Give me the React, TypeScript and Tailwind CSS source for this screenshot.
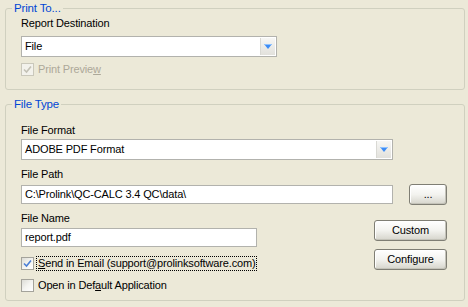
import React, { useState } from 'react';

const font = "font-['Liberation_Sans',Arial,sans-serif] tracking-[-0.15px]";

const DropArrow: React.FC = () => (
  <svg width="8" height="5" viewBox="0 0 8 5">
    <polygon points="0,0 8,0 4,5" fill="#3d8cf5" />
    <rect x="0" y="0" width="8" height="1" fill="#8fc2ff" />
  </svg>
);

interface ComboProps {
  value: string;
  width: string;
}

const Combo: React.FC<ComboProps> = ({ value, width }) => (
  <div className={`flex h-[21px] ${width} border border-[#b2b2ad] bg-white`}>
    <div className="flex flex-1 items-center pl-[3px] text-[11px] text-black">{value}</div>
    <div className="my-[1px] mr-[1px] flex w-[15px] items-center justify-center border-l border-[#d9d9d4] bg-gradient-to-b from-[#f7f7f5] to-[#e2e1dc]">
      <DropArrow />
    </div>
  </div>
);

const CheckMark: React.FC<{ color: string }> = ({ color }) => (
  <svg width="9" height="9" viewBox="0 0 9 9">
    <path d="M1 4.5 L3.5 7 L8 1.5" stroke={color} strokeWidth="1.6" fill="none" />
  </svg>
);

interface CheckProps {
  checked: boolean;
  disabled?: boolean;
  focused?: boolean;
  onToggle?: () => void;
  children: React.ReactNode;
}

const Check: React.FC<CheckProps> = ({ checked, disabled, focused, onToggle, children }) => (
  <div className="flex h-[15px] items-center" onClick={disabled ? undefined : onToggle}>
    <div
      className={`flex h-[13px] w-[13px] items-center justify-center border ${
        disabled ? 'border-[#cac8bb] bg-[#f3f2ec]' : 'border-[#a4a39b] bg-gradient-to-br from-[#dcdcd6] via-[#f4f4f0] to-white'
      }`}
    >
      {checked && <CheckMark color={disabled ? '#c3c1b5' : '#4b7fd6'} />}
    </div>
    <div
      className={`ml-[2px] flex h-[15px] items-center px-[2px] text-[11px] leading-none ${
        disabled ? 'text-[#aca899]' : 'text-black'
      } ${focused ? 'outline-1 outline-dotted outline-black -outline-offset-1' : ''}`}
    >
      {children}
    </div>
  </div>
);

const XpButton: React.FC<{ label: string; width: string }> = ({ label, width }) => (
  <button
    className={`flex h-[21px] ${width} items-center justify-center rounded-[3px] border border-[#7f7e74] bg-gradient-to-b from-white via-[#f3f3ef] to-[#d6d5cc] text-[11px] text-black shadow-[inset_-1px_-1px_0_#c4c3b9,inset_1px_1px_0_#ffffff]`}
  >
    {label}
  </button>
);

const GroupLegend: React.FC<{ text: string }> = ({ text }) => (
  <legend className="ml-[6px] px-[2px] text-[11.5px] leading-[14px] text-[#0046d5]">{text}</legend>
);

export default function App() {
  const [sendEmail, setSendEmail] = useState(true);
  const [openDefault, setOpenDefault] = useState(false);

  return (
    <div className={`h-[307px] w-[468px] bg-[#ece9d8] pl-[5px] pr-[3px] pt-[1px] ${font}`}>
      {/* Print To group */}
      <fieldset className="h-[89px] rounded-[3px] border border-[#d0d0bf]">
        <GroupLegend text="Print To..." />
        <div className="pl-[15px]">
          <div className="mt-[1px] h-[14px] text-[11px] leading-[14px] text-black">Report Destination</div>
          <div className="mt-[6px]">
            <Combo value="File" width="w-[256px]" />
          </div>
          <div className="mt-[5px]">
            <Check checked disabled>
              Print Previe<span className="underline">w</span>
            </Check>
          </div>
        </div>
      </fieldset>

      {/* File Type group */}
      <fieldset className="mt-[7px] h-[204px] rounded-[3px] border border-[#d0d0bf]">
        <GroupLegend text="File Type" />
        <div className="pl-[15px]">
          <div className="mt-[12px] h-[14px] text-[11px] leading-[14px] text-black">File Format</div>
          <div className="mt-[2px]">
            <Combo value="ADOBE PDF Format" width="w-[372px]" />
          </div>
          <div className="mt-[7px] h-[14px] text-[11px] leading-[14px] text-black">File Path</div>
          <div className="mt-[3px] flex items-center">
            <div className="flex h-[19px] w-[372px] items-center border border-[#b2b2ad] bg-white pl-[3px] text-[11px] text-black">
              C:\Prolink\QC-CALC 3.4 QC\data\
            </div>
            <div className="ml-[16px]">
              <XpButton label="..." width="w-[38px]" />
            </div>
          </div>
          <div className="flex">
            <div className="w-[353px]">
              <div className="mt-[6px] h-[14px] text-[11px] leading-[14px] text-black">File Name</div>
              <div className="mt-[3px] flex h-[19px] w-[236px] items-center border border-[#b2b2ad] bg-white pl-[3px] text-[11px] text-black">
                report.pdf
              </div>
              <div className="mt-[9px]">
                <Check checked={sendEmail} focused onToggle={() => setSendEmail(!sendEmail)}>
                  <span className="underline">S</span>end in Email (support@prolinksoftware.com)
                </Check>
              </div>
              <div className="mt-[7px]">
                <Check checked={openDefault} onToggle={() => setOpenDefault(!openDefault)}>
                  Open in Def<span className="underline">a</span>ult Application
                </Check>
              </div>
            </div>
            <div className="flex flex-col gap-[8px] pt-[15px]">
              <XpButton label="Custom" width="w-[73px]" />
              <XpButton label="Configure" width="w-[73px]" />
            </div>
          </div>
        </div>
      </fieldset>
    </div>
  );
}
